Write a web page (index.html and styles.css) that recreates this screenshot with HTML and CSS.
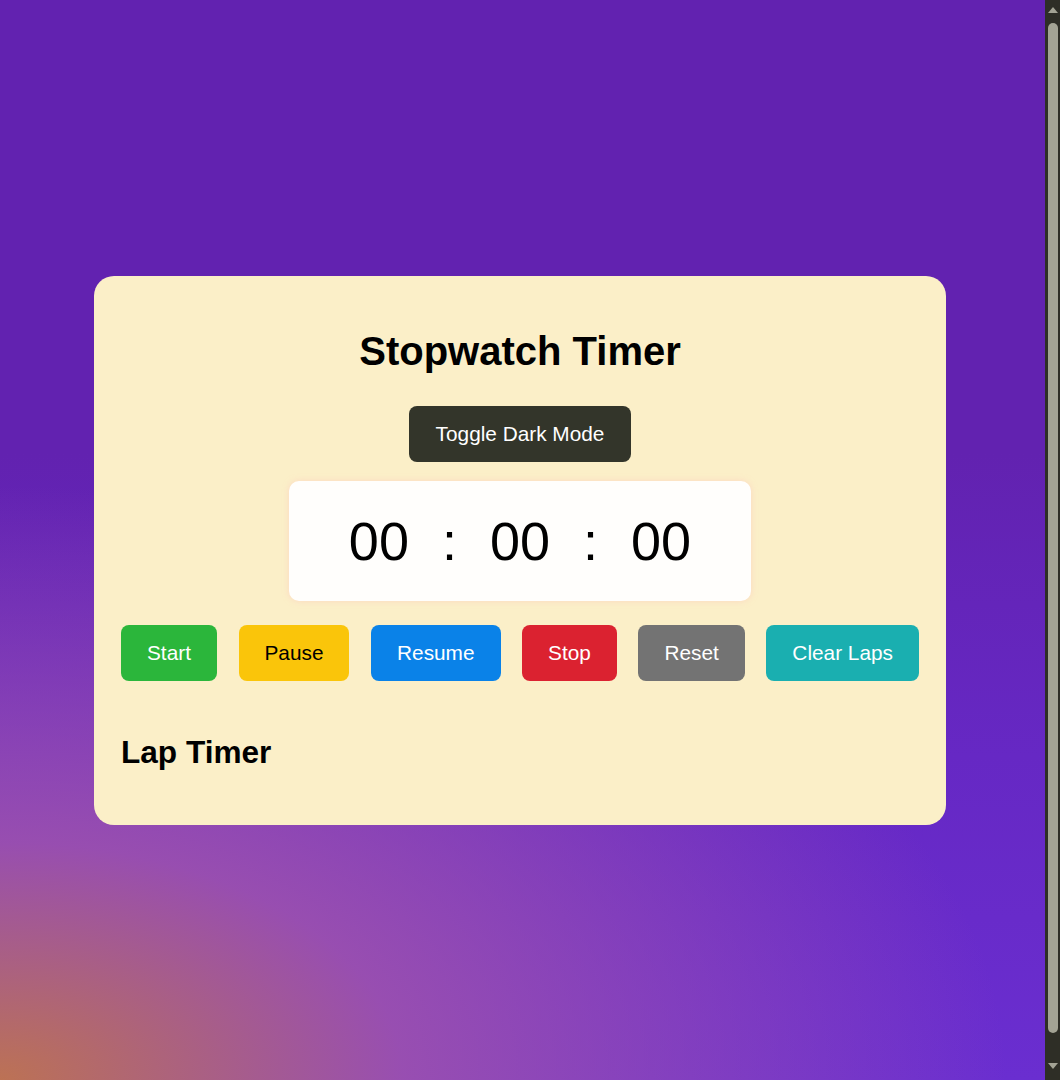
FILE: index.html
```html
<!DOCTYPE html>
<html lang="en">
<head>
<meta charset="UTF-8">
<title>Stopwatch Timer</title>
<link rel="stylesheet" href="styles.css">
</head>
<body>
<main class="card">
  <h1 class="title">Stopwatch Timer</h1>
  <button class="toggle">Toggle Dark Mode</button>
  <div class="display">
    <span class="seg">00</span>
    <span class="sep">:</span>
    <span class="seg">00</span>
    <span class="sep">:</span>
    <span class="seg">00</span>
  </div>
  <div class="controls">
    <button class="btn btn-start">Start</button>
    <button class="btn btn-pause">Pause</button>
    <button class="btn btn-resume">Resume</button>
    <button class="btn btn-stop">Stop</button>
    <button class="btn btn-reset">Reset</button>
    <button class="btn btn-clear">Clear Laps</button>
  </div>
  <h2 class="lap-title">Lap Timer</h2>
</main>
<div class="scrollbar" aria-hidden="true">
  <span class="arrow arrow-up"></span>
  <span class="thumb"></span>
  <span class="arrow arrow-down"></span>
</div>
</body>
</html>
```

FILE: styles.css
```css
html {
  background:
    radial-gradient(ellipse 95% 55% at 0% 100%, rgba(188, 114, 84, 1) 0%, rgba(160, 84, 172, 0.85) 40%, rgba(120, 60, 200, 0) 100%),
    linear-gradient(to bottom, #6222b0 0%, #6222b0 42%, #6628c4 70%, #6a2ed0 100%);
  background-attachment: fixed;
}

body {
  margin: 8px;
  min-height: 100vh;
  display: flex;
  align-items: center;
  justify-content: center;
  font-family: "Liberation Sans", Arial, sans-serif;
  color: #000;
}

.card {
  box-sizing: border-box;
  width: 852px;
  margin: 4px 20px 0 0;
  padding: 27px 27px 55px;
  background: #fbefc8;
  border-radius: 20px;
  display: flex;
  flex-direction: column;
  align-items: center;
}

.title {
  margin: 25px 0 32px;
  font-size: 40px;
  font-weight: bold;
  line-height: 46px;
  color: #000;
}

.toggle {
  margin: 0 0 19px;
  padding: 0 26.5px;
  height: 56px;
  border: none;
  border-radius: 8px;
  background: #33352a;
  color: #fff;
  font-family: "Liberation Sans", Arial, sans-serif;
  font-size: 20.8px;
}

.display {
  box-sizing: border-box;
  width: 462px;
  height: 120px;
  margin-bottom: 24px;
  background: #fffefc;
  border-radius: 10px;
  box-shadow: 0 0 6px rgba(255, 200, 190, 0.6);
  display: flex;
  align-items: center;
  justify-content: center;
  gap: 33px;
  font-size: 54px;
  color: #000;
}

.controls {
  align-self: stretch;
  display: flex;
  justify-content: space-between;
  margin-bottom: 53px;
}

.btn {
  height: 56px;
  padding: 0 26px;
  border: none;
  border-radius: 8px;
  color: #fff;
  font-family: "Liberation Sans", Arial, sans-serif;
  font-size: 20.8px;
}

.btn-start { background: #2bb63b; }
.btn-pause { background: #fac50a; color: #000; }
.btn-resume { background: #0a82e8; }
.btn-stop { background: #db2230; }
.btn-reset { background: #737373; }
.btn-clear { background: #1aafb0; }

.lap-title {
  align-self: flex-start;
  margin: 0;
  font-size: 31.6px;
  line-height: 36px;
  font-weight: bold;
  color: #000;
}

.scrollbar {
  position: fixed;
  top: 0;
  right: 0;
  bottom: 0;
  width: 15px;
  background: #2e2e26;
  display: flex;
  flex-direction: column;
  align-items: center;
}

.arrow {
  width: 0;
  height: 0;
  border-left: 5px solid transparent;
  border-right: 5px solid transparent;
}

.arrow-up {
  margin-top: 7px;
  border-bottom: 6px solid #a3a394;
}

.arrow-down {
  margin-bottom: 11px;
  border-top: 6px solid #a3a394;
}

.thumb {
  flex: 1;
  width: 10px;
  margin: 10px 0 30px;
  border-radius: 5px;
  background: #a3a394;
}
```
